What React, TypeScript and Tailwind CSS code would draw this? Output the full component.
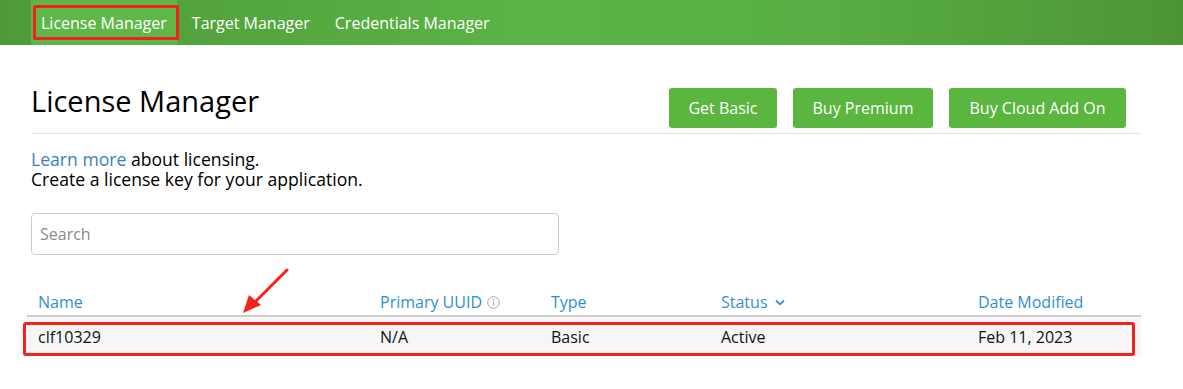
import React from "react";

const font = { fontFamily: '"Open Sans", "Noto Sans", sans-serif' };

export default function App() {
  return (
    <div className="relative w-[1183px] h-[389px] bg-white overflow-hidden" style={font}>
      {/* Top nav */}
      <div className="h-[45px] flex items-stretch bg-[linear-gradient(90deg,#4e9a39_0%,#5bb445_45%,#58ae42_70%,#4c9536_100%)]">
        <div className="w-[31px]" />
        <div className="flex items-center px-[10px] bg-[#5fb749] rounded-b-[3px] text-white text-[16px]">License Manager</div>
        <div className="flex items-center pl-[15px] text-white text-[16px]">Target Manager</div>
        <div className="flex items-center pl-[25px] text-white text-[16px]">Credentials Manager</div>
      </div>

      <div className="w-[1110px] ml-[31px]">
        {/* Title row */}
        <div className="flex items-end justify-between h-[89px] pb-[6px] border-b border-[#e3e3e3]">
          <h1 className="text-[29px] leading-[36px] text-black mb-[8px]">License Manager</h1>
          <div className="flex gap-[16px] mr-[15px] mb-[-1px]">
            <button className="h-[40px] w-[108px] rounded-[3px] bg-[#5ab63e] text-white text-[16px]">Get Basic</button>
            <button className="h-[40px] w-[140px] rounded-[3px] bg-[#5ab63e] text-white text-[16px]">Buy Premium</button>
            <button className="h-[40px] w-[177px] rounded-[3px] bg-[#5ab63e] text-white text-[16px]">Buy Cloud Add On</button>
          </div>
        </div>

        <div className="pt-[15px] text-[17.6px] leading-[20px] text-black">
          <div><span className="text-[#3a7fc0]">Learn more</span> about licensing.</div>
          <div>Create a license key for your application.</div>
        </div>

        <div className="mt-[24px] w-[528px] h-[42px] border border-[#cccccc] rounded-[4px] flex items-center pl-[8px] text-[16px] text-[#8a8a8a]">
          Search
        </div>

        {/* Table */}
        <div className="mt-[34px] -ml-[4px] w-[1114px] text-[16px]">
          <div className="grid grid-cols-[342px_171px_170px_257px_174px] h-[28px] items-center border-b-2 border-[#cfcfcf] text-[#2f8fd3]">
            <div className="pl-[11px]">Name</div>
            <div className="pl-[11px] flex items-center gap-[5px]">
              Primary UUID
              <svg width="13" height="13" viewBox="0 0 13 13">
                <circle cx="6.5" cy="6.5" r="5.8" fill="none" stroke="#a8a8a8" strokeWidth="1" />
                <circle cx="6.5" cy="3.8" r="0.8" fill="#a8a8a8" />
                <rect x="5.9" y="5.4" width="1.2" height="4.2" fill="#a8a8a8" />
              </svg>
            </div>
            <div className="pl-[11px]">Type</div>
            <div className="pl-[11px] flex items-center gap-[7px]">
              Status
              <svg width="10" height="7" viewBox="0 0 10 7">
                <path d="M1 1.5 L5 5.3 L9 1.5" fill="none" stroke="#2f8fd3" strokeWidth="1.8" />
              </svg>
            </div>
            <div className="pl-[11px]">Date Modified</div>
          </div>
          <div className="grid grid-cols-[342px_171px_170px_257px_174px] h-[39px] items-center bg-[#f6f6f6] text-[#111]">
            <div className="pl-[11px]">clf10329</div>
            <div className="pl-[11px]">N/A</div>
            <div className="pl-[11px]">Basic</div>
            <div className="pl-[11px]">Active</div>
            <div className="pl-[11px]">Feb 11, 2023</div>
          </div>
        </div>
      </div>

      {/* Annotations */}
      <div className="absolute left-[33px] top-[5px] w-[146px] h-[35px] border-[3px] border-[#f5221b] rounded-[2px]" />
      <div className="absolute left-[23px] top-[322px] w-[1112px] h-[34px] border-[3px] border-[#f5221b] rounded-[3px]" />
      <svg className="absolute left-[238px] top-[265px]" width="55" height="54" viewBox="0 0 55 54">
        <path d="M49 5 L14 40" stroke="#f5221b" strokeWidth="3" strokeLinecap="round" />
        <polygon points="5,48 11,30 23,40" fill="#f5221b" />
      </svg>
    </div>
  );
}
